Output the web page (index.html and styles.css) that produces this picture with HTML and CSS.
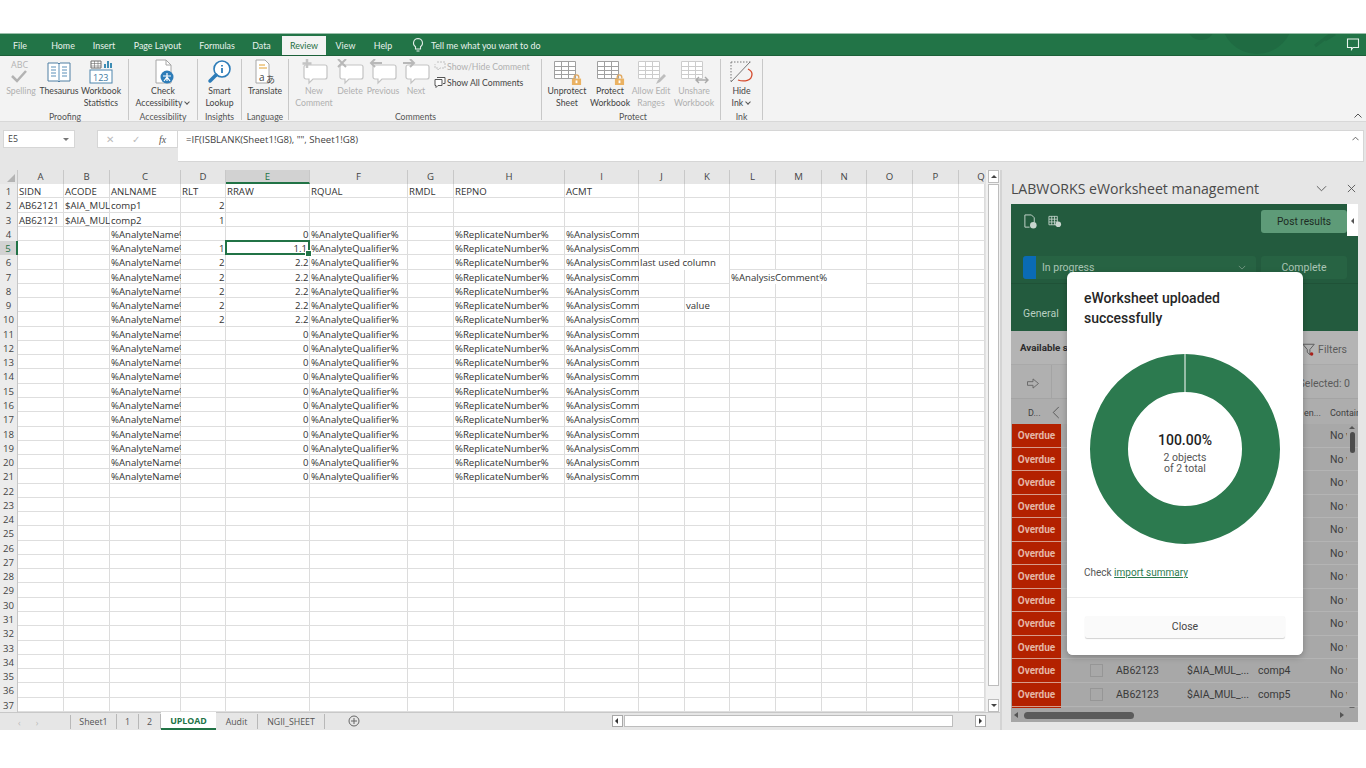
FILE: index.html
```html
<!DOCTYPE html>
<html lang="en">
<head>
<meta charset="utf-8">
<title>Excel - UPLOAD</title>
<link rel="stylesheet" href="styles.css">
</head>
<body>
<svg class="defs" width="0" height="0" aria-hidden="true">
  <symbol id="bubble" viewBox="0 0 30 26"><path d="M7 6h19a2 2 0 0 1 2 2v10a2 2 0 0 1-2 2H14l-4 4v-4H7a2 2 0 0 1-2-2V8a2 2 0 0 1 2-2z" fill="#fff" stroke="#c4c4c4" stroke-width="1.2"/></symbol>
  <symbol id="sheetgrid" viewBox="0 0 24 20"><path fill="#fff" d="M1 1h22v18H1z"/><path fill="none" stroke="currentColor" d="M1.500 1.500h21v17h-21zM1.500 6.500h21M1.500 10.500h21M1.500 14.500h21M8.500 1.500v17M15.500 1.500v17"/></symbol>
  <symbol id="lock" viewBox="0 0 12 12"><path fill="none" stroke="#e0a860" stroke-width="1.500" d="M3.500 5V3.500a2.500 2.500 0 0 1 5 0V5"/><rect x="1" y="5" width="10" height="7" fill="#eab263"/><rect x="5" y="7" width="2" height="3" fill="#fff"/></symbol>
</svg>

<div class="top-gap"></div>

<header class="menu">
  <nav class="tabs-nav">
    <span class="m m-file">File</span><span class="m m-home">Home</span><span class="m m-insert">Insert</span><span class="m m-layout">Page Layout</span><span class="m m-formulas">Formulas</span><span class="m m-data">Data</span><span class="m m-review">Review</span><span class="m m-view">View</span><span class="m m-help">Help</span>
    <svg class="bulb" viewBox="0 0 12 16" width="12" height="16"><path d="M6 1.500a4.500 4.500 0 0 0-2.500 8.200V12h5V9.700A4.500 4.500 0 0 0 6 1.500zM4.500 14h3" fill="none" stroke="#e4efe9" stroke-width="1.100"/></svg>
    <span class="m m-tell">Tell me what you want to do</span>
  </nav>
  <svg class="deco" viewBox="0 0 180 22" width="180" height="22"><circle cx="26" cy="-8" r="14" fill="#1f6b42"/><circle cx="82" cy="-16" r="36" fill="#1f6b42"/><path d="M-6 0l-8 4M140 12l16-12M150 6l10-6" stroke="#1f6b42" stroke-width="3"/></svg>
  <svg class="feedback" viewBox="0 0 14 14" width="14" height="14"><path d="M1.500 2h11v8.500H7l-1.500 2v-2h-4z" fill="none" stroke="#e8f2ec" stroke-width="1.100"/></svg>
</header>

<section class="ribbon">
  <div class="group g-proof">
    <div class="btns">
      <div class="btn dis w-spell"><svg viewBox="0 0 26 26" width="26" height="26"><text x="3" y="9" class="abc">ABC</text><path d="M4 17l5 5 9-10" fill="none" stroke="#b3b3b3" stroke-width="2.500"/></svg><span>Spelling</span></div>
      <div class="btn w-thes"><svg viewBox="0 0 26 26" width="26" height="26"><path d="M2 4h10l1 1 1-1h10v18H14l-1 1-1-1H2z" fill="#fff" stroke="#4f7ea3"/><path d="M13 5v17M5 8h5M5 11h5M5 14h5M5 17h5M16 8h5M16 11h5M16 14h5M16 17h5" stroke="#5b8fb8"/></svg><span>Thesaurus</span></div>
      <div class="btn w-stat"><svg viewBox="0 0 26 26" width="26" height="26"><rect x="2" y="11" width="22" height="13" fill="#fff" stroke="#4f86ad"/><text x="5" y="22" class="n123">123</text><path d="M3 2h10v7H3z" fill="#fff" stroke="#6c6c6c"/><path d="M3 4.500h10M3 7h10M6.500 2v7M10 2v7" stroke="#6c6c6c" stroke-width=".6"/><path d="M16 9V5h2v4zM19 9V2h2v7zM22 9V4h2v5z" fill="#3c8cb4"/></svg><span>Workbook<br>Statistics</span></div>
    </div>
    <div class="glabel">Proofing</div>
  </div>
  <div class="group g-acc">
    <div class="btns">
      <div class="btn"><svg viewBox="0 0 26 26" width="26" height="26"><path d="M6 1h10l5 5v18H6z" fill="#fff" stroke="#a6a6a6"/><path d="M16 1v5h5" fill="none" stroke="#a6a6a6"/><circle cx="17" cy="18" r="6.500" fill="#2d7cb8"/><path d="M17 14v8M13 17h8M14 22l3-4 3 4" stroke="#fff" stroke-width="1.200" fill="none"/></svg><span>Check<br>Accessibility <em class="chev"></em></span></div>
    </div>
    <div class="glabel">Accessibility</div>
  </div>
  <div class="group g-ins">
    <div class="btns">
      <div class="btn"><svg viewBox="0 0 26 26" width="26" height="26"><circle cx="15" cy="10" r="8" fill="#fff" stroke="#2d7cb8" stroke-width="1.600"/><path d="M9 16l-6 6" stroke="#2d7cb8" stroke-width="3.500" stroke-linecap="round"/><path d="M15 9v5M15 6v1.500" stroke="#2d7cb8" stroke-width="1.800"/></svg><span>Smart<br>Lookup</span></div>
    </div>
    <div class="glabel">Insights</div>
  </div>
  <div class="group g-lang">
    <div class="btns">
      <div class="btn"><svg viewBox="0 0 26 26" width="26" height="26"><path d="M4 1h9l4 4v19H4z" fill="#fff" stroke="#a6a6a6"/><path d="M7 6h6M7 9h8" stroke="#e0a030"/><text x="7" y="22" class="tr">a</text><text x="14" y="24" class="tr2">あ</text></svg><span>Translate</span></div>
    </div>
    <div class="glabel">Language</div>
  </div>
  <div class="group g-comm">
    <div class="btns">
      <div class="btn dis w-new"><svg viewBox="0 0 30 26" width="30" height="26"><use href="#bubble"/><path d="M8 0v9M3.500 4.500h9" stroke="#c4c4c4" stroke-width="2.500"/></svg><span>New<br>Comment</span></div>
      <div class="btn dis w-del"><svg viewBox="0 0 30 26" width="30" height="26"><use href="#bubble"/><path d="M3 0l8 8M11 0l-8 8" stroke="#b8b8b8" stroke-width="2"/></svg><span>Delete</span></div>
      <div class="btn dis w-prev"><svg viewBox="0 0 30 26" width="30" height="26"><use href="#bubble"/><path d="M14 4H3M7 0L3 4l4 4" fill="none" stroke="#b8b8b8" stroke-width="2"/></svg><span>Previous</span></div>
      <div class="btn dis w-next"><svg viewBox="0 0 30 26" width="30" height="26"><use href="#bubble"/><path d="M2 4h11M9 0l4 4-4 4" fill="none" stroke="#b8b8b8" stroke-width="2"/></svg><span>Next</span></div>
      <div class="side">
        <div class="side-i dis"><svg viewBox="0 0 12 12" width="12" height="12"><path d="M3 2h8v6H6l-2 2V8H1V4" fill="none" stroke="#c0c0c0" stroke-dasharray="2 1"/></svg>Show/Hide Comment</div>
        <div class="side-i"><svg viewBox="0 0 12 12" width="12" height="12"><path d="M3 1.500h8v6H9M1 3.500h7v6H4l-2 2v-2H1z" fill="#fff" stroke="#555"/></svg>Show All Comments</div>
      </div>
    </div>
    <div class="glabel">Comments</div>
  </div>
  <div class="group g-prot">
    <div class="btns">
      <div class="btn w-unp"><span class="iconbox grey"><svg viewBox="0 0 24 20" width="24" height="20"><use href="#sheetgrid"/></svg><svg class="lk" viewBox="0 0 12 12" width="11" height="11"><use href="#lock"/></svg></span><span>Unprotect<br>Sheet</span></div>
      <div class="btn w-pro"><span class="iconbox grey"><svg viewBox="0 0 24 20" width="24" height="20"><use href="#sheetgrid"/></svg><svg class="lk" viewBox="0 0 12 12" width="11" height="11"><use href="#lock"/></svg></span><span>Protect<br>Workbook</span></div>
      <div class="btn dis w-allow"><span class="iconbox pale"><svg viewBox="0 0 24 20" width="24" height="20"><use href="#sheetgrid"/></svg><svg class="lk" viewBox="0 0 12 12" width="12" height="12"><path d="M2 11l2-4 6-6 2 2-6 6z" fill="#bdbdbd"/></svg></span><span>Allow Edit<br>Ranges</span></div>
      <div class="btn dis w-unsh"><span class="iconbox pale"><svg viewBox="0 0 24 20" width="24" height="20"><use href="#sheetgrid"/></svg><svg class="lk" viewBox="0 0 14 10" width="14" height="10"><path d="M1 5h12M4 2L1 5l3 3M10 2l3 3-3 3" fill="none" stroke="#aaa" stroke-width="1.400"/></svg></span><span>Unshare<br>Workbook</span></div>
    </div>
    <div class="glabel">Protect</div>
  </div>
  <div class="group g-ink">
    <div class="btns">
      <div class="btn"><svg viewBox="0 0 26 26" width="26" height="26"><path d="M2 3h21" stroke="#777" stroke-dasharray="1.500 1.500"/><path d="M2 3v20" stroke="#777" stroke-dasharray="1.500 1.500"/><path d="M2 23L21 3" stroke="#777"/><path d="M9 21c6 2 14 1 14-6 0-3-2-4-4-5" fill="none" stroke="#d4492c" stroke-width="1.300"/></svg><span>Hide<br>Ink <em class="chev"></em></span></div>
    </div>
    <div class="glabel">Ink</div>
  </div>
  <svg class="collapse" viewBox="0 0 8 5" width="8" height="5"><path d="M.5 4.500L4 1l3.500 3.500" fill="none" stroke="#555"/></svg>
</section>

<div class="fbar">
  <div class="namebox"><span>E5</span><i class="dd"></i></div>
  <div class="fx"><span class="x">✕</span><span class="ck">✓</span><span class="fxt">fx</span></div>
  <div class="formula"><span>=IF(ISBLANK(Sheet1!G8), "", Sheet1!G8)</span><svg viewBox="0 0 8 5" width="7" height="5"><path d="M.5 4.500L4 1l3.500 3.500" fill="none" stroke="#555"/></svg></div>
</div>

<div class="work">
  <main class="excel">
    <div class="gridwrap">
      <div class="sheet">
        <div class="vlines"><i></i><i></i><i></i><i></i><i></i><i></i><i></i><i></i><i></i><i></i><i></i><i></i><i></i><i></i><i></i><i></i><i></i><i></i></div>
        <div class="row head"><b class="corner"></b><b>A</b><b>B</b><b>C</b><b>D</b><b class="on">E</b><b>F</b><b>G</b><b>H</b><b>I</b><b>J</b><b>K</b><b>L</b><b>M</b><b>N</b><b>O</b><b>P</b><b class="q">Q</b></div>
        <div class="row"><b>1</b><span class="a">SIDN</span><span class="b">ACODE</span><span class="c">ANLNAME</span><span class="d">RLT</span><span class="e">RRAW</span><span class="f">RQUAL</span><span class="g">RMDL</span><span class="h">REPNO</span><span class="i">ACMT</span></div>
        <div class="row"><b>2</b><span class="a">AB62121</span><span class="b">$AIA_MUL</span><span class="c">comp1</span><span class="d r">2</span></div>
        <div class="row"><b>3</b><span class="a">AB62121</span><span class="b">$AIA_MUL</span><span class="c">comp2</span><span class="d r">1</span></div>
        <div class="row"><b>4</b><span class="c">%AnalyteName%</span><span class="e r">0</span><span class="f">%AnalyteQualifier%</span><span class="h">%ReplicateNumber%</span><span class="i">%AnalysisComment%</span></div>
        <div class="row"><b class="on">5</b><span class="c">%AnalyteName%</span><span class="d r">1</span><span class="e r sel">1.1</span><span class="f">%AnalyteQualifier%</span><span class="h">%ReplicateNumber%</span><span class="i">%AnalysisComment%</span></div>
        <div class="row"><b>6</b><span class="c">%AnalyteName%</span><span class="d r">2</span><span class="e r">2.2</span><span class="f">%AnalyteQualifier%</span><span class="h">%ReplicateNumber%</span><span class="i">%AnalysisComment%</span><span class="j spill">last used column</span></div>
        <div class="row"><b>7</b><span class="c">%AnalyteName%</span><span class="d r">2</span><span class="e r">2.2</span><span class="f">%AnalyteQualifier%</span><span class="h">%ReplicateNumber%</span><span class="i">%AnalysisComment%</span><span class="l spill">%AnalysisComment%</span></div>
        <div class="row"><b>8</b><span class="c">%AnalyteName%</span><span class="d r">2</span><span class="e r">2.2</span><span class="f">%AnalyteQualifier%</span><span class="h">%ReplicateNumber%</span><span class="i">%AnalysisComment%</span></div>
        <div class="row"><b>9</b><span class="c">%AnalyteName%</span><span class="d r">2</span><span class="e r">2.2</span><span class="f">%AnalyteQualifier%</span><span class="h">%ReplicateNumber%</span><span class="i">%AnalysisComment%</span><span class="k">value</span></div>
        <div class="row"><b>10</b><span class="c">%AnalyteName%</span><span class="d r">2</span><span class="e r">2.2</span><span class="f">%AnalyteQualifier%</span><span class="h">%ReplicateNumber%</span><span class="i">%AnalysisComment%</span></div>
        <div class="row"><b>11</b><span class="c">%AnalyteName%</span><span class="e r">0</span><span class="f">%AnalyteQualifier%</span><span class="h">%ReplicateNumber%</span><span class="i">%AnalysisComment%</span></div>
        <div class="row"><b>12</b><span class="c">%AnalyteName%</span><span class="e r">0</span><span class="f">%AnalyteQualifier%</span><span class="h">%ReplicateNumber%</span><span class="i">%AnalysisComment%</span></div>
        <div class="row"><b>13</b><span class="c">%AnalyteName%</span><span class="e r">0</span><span class="f">%AnalyteQualifier%</span><span class="h">%ReplicateNumber%</span><span class="i">%AnalysisComment%</span></div>
        <div class="row"><b>14</b><span class="c">%AnalyteName%</span><span class="e r">0</span><span class="f">%AnalyteQualifier%</span><span class="h">%ReplicateNumber%</span><span class="i">%AnalysisComment%</span></div>
        <div class="row"><b>15</b><span class="c">%AnalyteName%</span><span class="e r">0</span><span class="f">%AnalyteQualifier%</span><span class="h">%ReplicateNumber%</span><span class="i">%AnalysisComment%</span></div>
        <div class="row"><b>16</b><span class="c">%AnalyteName%</span><span class="e r">0</span><span class="f">%AnalyteQualifier%</span><span class="h">%ReplicateNumber%</span><span class="i">%AnalysisComment%</span></div>
        <div class="row"><b>17</b><span class="c">%AnalyteName%</span><span class="e r">0</span><span class="f">%AnalyteQualifier%</span><span class="h">%ReplicateNumber%</span><span class="i">%AnalysisComment%</span></div>
        <div class="row"><b>18</b><span class="c">%AnalyteName%</span><span class="e r">0</span><span class="f">%AnalyteQualifier%</span><span class="h">%ReplicateNumber%</span><span class="i">%AnalysisComment%</span></div>
        <div class="row"><b>19</b><span class="c">%AnalyteName%</span><span class="e r">0</span><span class="f">%AnalyteQualifier%</span><span class="h">%ReplicateNumber%</span><span class="i">%AnalysisComment%</span></div>
        <div class="row"><b>20</b><span class="c">%AnalyteName%</span><span class="e r">0</span><span class="f">%AnalyteQualifier%</span><span class="h">%ReplicateNumber%</span><span class="i">%AnalysisComment%</span></div>
        <div class="row"><b>21</b><span class="c">%AnalyteName%</span><span class="e r">0</span><span class="f">%AnalyteQualifier%</span><span class="h">%ReplicateNumber%</span><span class="i">%AnalysisComment%</span></div>
        <div class="row"><b>22</b></div><div class="row"><b>23</b></div><div class="row"><b>24</b></div><div class="row"><b>25</b></div><div class="row"><b>26</b></div><div class="row"><b>27</b></div><div class="row"><b>28</b></div><div class="row"><b>29</b></div><div class="row"><b>30</b></div><div class="row"><b>31</b></div><div class="row"><b>32</b></div><div class="row"><b>33</b></div><div class="row"><b>34</b></div><div class="row"><b>35</b></div><div class="row"><b>36</b></div><div class="row"><b>37</b></div>
      </div>
      <div class="vscroll">
        <div class="arrow up"></div>
        <div class="thumb"></div>
        <div class="arrow down"></div>
      </div>
    </div>
    <footer class="tabbar">
      <div class="tabnav"><span>‹</span><span>›</span></div>
      <div class="tab t-s1">Sheet1</div><div class="tab t-1">1</div><div class="tab t-2">2</div><div class="tab active">UPLOAD</div><div class="tab t-aud">Audit</div><div class="tab t-ng">NGII_SHEET</div>
      <svg class="addsheet" viewBox="0 0 12 12" width="12" height="12"><circle cx="6" cy="6" r="5" fill="none" stroke="#666"/><path d="M6 3v6M3 6h6" stroke="#666"/></svg>
      <div class="hscroll"><i class="ar l"></i><i class="hthumb"></i><i class="ar r"></i></div>
    </footer>
  </main>

  <aside class="pane">
    <div class="pane-head"><h1>LABWORKS eWorksheet management</h1>
      <svg viewBox="0 0 12 7" width="11" height="7"><path d="M1 1l5 5 5-5" fill="none" stroke="#555"/></svg>
      <svg viewBox="0 0 10 10" width="9" height="9"><path d="M1 1l8 8M9 1l-8 8" stroke="#555"/></svg>
    </div>
    <div class="addin">
      <div class="gtop">
        <svg viewBox="0 0 16 16" width="15" height="17"><path d="M2 1h7l3 3v5M2 1v13h5" fill="none" stroke="#c9d6cf"/><circle cx="11" cy="12" r="3.500" fill="#c9d6cf"/></svg>
        <svg class="ic2" viewBox="0 0 15 13" width="14" height="13"><path d="M1 1h9v9H1zM1 4h9M1 7h9M4 1v9M7 1v9" fill="none" stroke="#c9d6cf" stroke-width=".9"/><circle cx="11" cy="9.500" r="3" fill="#c9d6cf"/></svg>
        <div class="post">Post results</div>
        <div class="handle"><i></i></div>
      </div>
      <div class="gstatus">
        <div class="status"><i class="blue"></i><span>In progress</span><svg viewBox="0 0 10 6" width="8" height="5"><path d="M1 1l4 4 4-4" fill="none" stroke="#7fa08d"/></svg></div>
        <div class="complete">Complete</div>
      </div>
      <div class="gtabs">General</div>
      <div class="avail"><b>Available s</b><div class="filters"><svg viewBox="0 0 16 16" width="14" height="15"><path d="M1 2h13L9 8v6L6 11V8z" fill="none" stroke="#555"/><circle cx="11" cy="13" r="2" fill="#a8201a"/></svg><span>Filters</span></div></div>
      <div class="toolbar"><svg viewBox="0 0 14 12" width="14" height="11"><path d="M1 4h6V1l6 5-6 5V8H1z" fill="none" stroke="#666"/></svg><i class="tsep"></i><span>Selected: 0</span></div>
      <div class="colhead"><span class="ch-d">D...</span><svg viewBox="0 0 8 14" width="8" height="13"><path d="M7 1L1 7l6 6" fill="none" stroke="#555"/></svg><span class="ch-en">en...</span><span class="ch-c">Contain</span></div>
      <div class="list">
        <div class="lrow"><b>Overdue</b><i class="cb"></i><span class="nov">No v</span></div>
        <div class="lrow"><b>Overdue</b><i class="cb"></i><span class="nov">No v</span></div>
        <div class="lrow"><b>Overdue</b><i class="cb"></i><span class="nov">No v</span></div>
        <div class="lrow"><b>Overdue</b><i class="cb"></i><span class="nov">No v</span></div>
        <div class="lrow"><b>Overdue</b><i class="cb"></i><span class="nov">No v</span></div>
        <div class="lrow"><b>Overdue</b><i class="cb"></i><span class="nov">No v</span></div>
        <div class="lrow"><b>Overdue</b><i class="cb"></i><span class="nov">No v</span></div>
        <div class="lrow"><b>Overdue</b><i class="cb"></i><span class="nov">No v</span></div>
        <div class="lrow"><b>Overdue</b><i class="cb"></i><span class="nov">No v</span></div>
        <div class="lrow"><b>Overdue</b><i class="cb"></i><span class="nov">No v</span></div>
        <div class="lrow"><b>Overdue</b><i class="cb"></i><span class="sid">AB62123</span><span class="ac">$AIA_MUL_...</span><span class="cp">comp4</span><span class="nov">No v</span></div>
        <div class="lrow"><b>Overdue</b><i class="cb"></i><span class="sid">AB62123</span><span class="ac">$AIA_MUL_...</span><span class="cp">comp5</span><span class="nov">No v</span></div>
        <div class="lrow"><b></b></div>
      </div>
      <div class="listthumb"></div>
      <i class="listup"></i><i class="listdown"></i>
      <div class="lscroll"><i class="la"></i><i class="lthumb"></i><i class="ra"></i></div>
    </div>

    <div class="modal">
      <div class="modal-body">
        <h2>eWorksheet uploaded successfully</h2>
        <div class="donut">
          <svg viewBox="0 0 190 192" width="190" height="192"><circle cx="95" cy="96" r="76" fill="none" stroke="#2c7a4f" stroke-width="38"/><path d="M95 1v38" stroke="#fff" stroke-width="1"/></svg>
          <div class="donut-text"><strong>100.00%</strong><span>2 objects<br>of 2 total</span></div>
        </div>
        <p class="check">Check <a>import summary</a></p>
      </div>
      <div class="modal-foot"><div class="close">Close</div></div>
    </div>
  </aside>
</div>
</body>
</html>
```
FILE: styles.css
```css
* { box-sizing: border-box; }
html, body { margin: 0; padding: 0; }
body { width: 1366px; height: 768px; overflow: hidden; background: #fff; font-family: "Open Sans", "Liberation Sans", sans-serif; color: #333; }
.defs { position: absolute; }
.top-gap { height: 33px; background: #fff; }

/* Title / tab strip */
.menu { position: relative; height: 23px; background: #227447; overflow: hidden; border-top: 1px solid #9bbfab; border-bottom: 1px solid #1c6039; }
.tabs-nav { display: flex; align-items: center; height: 21px; font-family: Lato, "Open Sans", sans-serif; font-size: 8.9px; color: #e9f2ed; }
.m { display: block; text-align: center; padding-top: 1px; }
.m-file { width: 40px; }
.m-home { width: 46px; }
.m-insert { width: 36px; }
.m-layout { width: 71px; }
.m-formulas { width: 48px; }
.m-data { width: 41px; }
.m-review { width: 44px; height: 20px; margin-top: 2px; padding-top: 0; line-height: 20px; background: #f3f3f3; color: #1f6f43; }
.m-view { width: 39px; }
.m-help { width: 36px; }
.bulb { margin-left: 11px; margin-top: 1px; }
.m-tell { margin-left: 7px; }
.deco { position: absolute; left: 1175px; top: 0; }
.feedback { position: absolute; left: 1346px; top: 3px; }

/* Ribbon */
.ribbon { position: relative; display: flex; height: 66px; background: #f3f3f3; border-bottom: 1px solid #d8d8d8; padding: 3px 0 2px; }
.group { display: flex; flex-direction: column; align-items: center; border-right: 1px solid #c8c8c8; height: 61px; font-family: Lato, "Open Sans", sans-serif; font-size: 8.7px; color: #444; }
.g-proof { width: 129px; align-items: flex-start; padding-left: 2px; }
.g-proof .glabel { align-self: center; }
.g-acc { width: 69px; }
.g-ins { width: 44px; }
.g-lang { width: 47px; }
.g-comm { width: 253px; align-items: flex-start; padding-left: 1px; }
.g-comm .glabel { align-self: center; }
.g-prot { width: 179px; align-items: flex-start; padding-left: 4px; }
.g-prot .glabel { align-self: center; }
.g-ink { width: 42px; }
.btns { display: flex; flex: 1; }
.btn { display: flex; flex-direction: column; align-items: center; text-align: center; line-height: 12px; white-space: nowrap; }
.btn > svg, .iconbox { flex: none; margin-bottom: 0; height: 26px; }
.btn.dis, .side-i.dis { color: #b0b0b0; }
.w-spell { width: 38px; } .w-thes { width: 38px; } .w-stat { width: 46px; }
.w-new { width: 48px; } .w-del { width: 24px; } .w-prev { width: 42px; } .w-next { width: 24px; }
.w-unp { width: 42px; } .w-pro { width: 44px; } .w-allow { width: 38px; } .w-unsh { width: 48px; }
.side { display: flex; flex-direction: column; gap: 4px; margin-left: 6px; padding-top: 1px; white-space: nowrap; }
.side-i { display: flex; align-items: center; gap: 1px; height: 12px; }
.glabel { height: 11px; line-height: 15px; font-size: 8.7px; color: #555; }
.chev { display: inline-block; width: 4px; height: 4px; margin: 0 1px 2px 1px; border-right: 1px solid #555; border-bottom: 1px solid #555; transform: rotate(45deg); }
.abc { font: 9px "Open Sans", sans-serif; fill: #b3b3b3; }
.n123 { font: 9px "Open Sans", sans-serif; fill: #3f7aa3; }
.tr { font: 10px "Open Sans", sans-serif; fill: #444; }
.tr2 { font: 9px "Noto Sans CJK JP", sans-serif; fill: #444; }
.iconbox { position: relative; display: block; width: 30px; padding-top: 1px; }
.iconbox svg { display: block; margin-left: 1px; }
.iconbox.grey { color: #a0a0a0; }
.iconbox.pale { color: #cccccc; }
.iconbox .lk { position: absolute; right: 0; bottom: 0; }
.collapse { position: absolute; right: 4px; bottom: 3px; }

/* Formula bar */
.fbar { display: flex; height: 48px; padding: 8px 0 0 3px; font-size: 8.8px; background: #e6e6e6; }
.namebox { position: relative; width: 72px; height: 18px; background: #fff; border: 1px solid #d6d6d6; line-height: 16px; padding-left: 4px; color: #444; }
.dd { position: absolute; right: 5px; top: 7px; border: 3px solid transparent; border-top: 3px solid #777; }
.fx { display: flex; align-items: center; width: 81px; height: 18px; margin-left: 22px; background: #fff; border: 1px solid #d6d6d6; color: #bbb; }
.x { margin-left: 8px; font-size: 10px; }
.ck { margin-left: 18px; font-size: 10px; }
.fxt { margin-left: 19px; font: italic 10px "Liberation Serif", serif; color: #555; }
.formula { display: flex; justify-content: space-between; width: 1186px; height: 32px; background: #fff; border: 1px solid #d6d6d6; border-left: 0; padding: 2px 4px 0 8px; font-size: 9.6px; color: #444; line-height: 13px; }
.formula svg { margin-top: 3px; }

/* Work area */
.work { display: flex; height: 560px; }
.excel { width: 1000px; flex: none; display: flex; flex-direction: column; background: #e6e6e6; }
.gridwrap { display: flex; height: 542px; background: #fff; }
.sheet { position: relative; width: 985px; flex: none; overflow: hidden; font-size: 9.6px; color: #333; }
.vlines, .row { display: grid; grid-template-columns: 18px 46px 46px 71px 45px 84px 98px 46px 111px 74px 46px 45px 46px 46px 45px 46px 46px 26px; }
.vlines { position: absolute; inset: 0; }
.vlines i { border-right: 1px solid #dcdcdc; }
.row { position: relative; grid-auto-rows: 14.27px; height: 14.27px; border-bottom: 1px solid #dedede; line-height: 15px; }
.row b { grid-column: 1; font-weight: 400; text-align: center; background: #ececec; border-right: 1px solid #c6c6c6; color: #444; }
.row b.on { background: #d2d2d2; border-right: 2px solid #217346; color: #217346; }
.row span { grid-row: 1; padding: 0 1.5px 0 1px; overflow: hidden; white-space: nowrap; }
.row .a { grid-column: 2; } .row .b { grid-column: 3; } .row .c { grid-column: 4; } .row .d { grid-column: 5; } .row .e { grid-column: 6; } .row .f { grid-column: 7; } .row .g { grid-column: 8; } .row .h { grid-column: 9; } .row .i { grid-column: 10; } .row .k { grid-column: 12; }
.row .j { grid-column: 11 / span 2; } .row .l { grid-column: 13 / span 3; }
.spill { background: #fff; margin-right: 1px; }
.row .r { text-align: right; }
.row .sel { position: relative; outline: 2px solid #217346; outline-offset: -2px; margin: -1px 0 0 -1px; padding: 1px 3px 0 2px; overflow: visible; z-index: 2; }
.row .sel::after { content: ""; position: absolute; right: -2px; bottom: -2px; width: 5px; height: 5px; background: #217346; border: 1px solid #fff; }
.row.head { height: 14px; background: #e6e6e6; border-bottom: 1px solid #b4b4b4; text-align: center; line-height: 14px; }
.row.head b { grid-column: auto; background: #e6e6e6; border-right: 1px solid #c8c8c8; }
.row.head b.on { background: #d2d2d2; border-right: 1px solid #c8c8c8; border-bottom: 2px solid #217346; height: 14px; color: #217346; }
.row.head .q { padding-left: 18px; border-right: 0; overflow: hidden; }
.row.head .corner { position: relative; }
.corner::after { content: ""; position: absolute; right: 2px; bottom: 2px; border: 4px solid transparent; border-right-color: #b4b4b4; border-bottom-color: #b4b4b4; }
.vscroll { display: flex; flex-direction: column; width: 15px; padding: 0 1px 0 2px; background: #f1f1f1; border-left: 1px solid #e2e2e2; }
.arrow { position: relative; height: 13px; background: #fff; border: 1px solid #bdbdbd; flex: none; }
.arrow::after { content: ""; position: absolute; left: 2px; border: 3px solid transparent; }
.arrow.up::after { top: 1px; border-bottom-color: #444; }
.arrow.down::after { top: 4px; border-top-color: #444; }
.thumb { height: 502px; background: #fff; border: 1px solid #bdbdbd; margin: 1px 0 auto; flex: none; }

.tabbar { position: relative; display: flex; align-items: stretch; height: 18px; background: #e6e6e6; border-top: 1px solid #c8c8c8; font-size: 8.8px; color: #555; }
.tabnav { display: flex; width: 71px; padding-left: 18px; gap: 15px; color: #bbb; line-height: 16px; border-right: 1px solid #b8b8b8; margin: 2px 0 1px; }
.tab { text-align: center; line-height: 17px; margin: 1px 0; border-right: 1px solid #b8b8b8; white-space: nowrap; }
.t-s1 { width: 46px; } .t-1 { width: 22px; } .t-2 { width: 22px; }
.tab.active { width: 55px; margin: -1px 0 0; height: 18px; background: #fff; border: 0; border-bottom: 2px solid #217346; color: #217346; font-weight: 700; line-height: 18px; }
.t-aud { width: 42px; } .t-ng { width: 67px; }
.addsheet { margin: 2px 0 0 23px; }
.hscroll { position: absolute; left: 612px; top: 2px; display: flex; width: 374px; height: 12px; }
.ar { position: relative; flex: none; width: 11px; height: 12px; background: #fff; border: 1px solid #a8a8a8; }
.ar.l::after, .ar.r::after { content: ""; position: absolute; top: 2px; border: 3px solid transparent; }
.ar.l::after { left: -1px; border-right-color: #333; }
.ar.r::after { left: 3px; border-left-color: #333; }
.hthumb { flex: none; width: 329px; height: 12px; margin-left: 1px; margin-right: 22px; background: #fff; border: 1px solid #bdbdbd; }

/* Task pane */
.pane { position: relative; width: 366px; flex: none; height: 560px; background: #e6e6e6; padding-left: 11px; border-left: 2px solid #d4d4d4; }
.pane-head { display: flex; align-items: center; height: 34px; margin-left: -2px; padding-top: 3px; }
.pane-head h1 { margin: 0; font-size: 14.1px; font-weight: 400; color: #4a4a4a; white-space: nowrap; width: 305px; font-family: "Open Sans", sans-serif; }
.pane-head svg + svg { margin-left: 20px; }
.addin { position: relative; width: 347px; height: 518px; margin-left: -2px; background: #a6a6a6; overflow: hidden; font-family: Roboto, sans-serif; font-size: 10px; }
.gtop { display: flex; align-items: center; height: 35px; background: #235b3e; padding: 0 0 0 12px; position: relative; }
.ic2 { margin-left: 10px; }
.post { position: absolute; left: 250px; top: 6px; width: 86px; height: 23px; background: #5e9b78; border-radius: 3px; text-align: center; line-height: 23px; color: #1d2b23; font-size: 10.2px; }
.handle { position: absolute; right: 0; top: 0; width: 11px; height: 32px; background: #fff; }
.handle i { position: absolute; left: 4px; top: 14px; border: 3px solid transparent; border-right-color: #555; border-left-width: 0; }
.gstatus { display: flex; height: 45px; background: #235b3e; padding-top: 17px; border-bottom: 1px solid #1f5237; }
.status { display: flex; align-items: center; width: 233px; height: 23px; margin-left: 12px; padding-right: 10px; background: #276343; border-radius: 3px; color: #aac5b5; font-size: 10.5px; }
.blue { width: 13px; height: 23px; background: #0a6bb5; border-radius: 3px 0 0 3px; }
.status span { flex: 1; margin-left: 6px; }
.complete { width: 86px; height: 23px; margin-left: 5px; background: #276343; border-radius: 3px; text-align: center; line-height: 23px; color: #aac5b5; font-size: 10.5px; }
.gtabs { height: 47px; background: #235b3e; padding: 23px 0 0 12px; color: #b8cfc1; font-size: 10.5px; }
.avail { display: flex; justify-content: space-between; align-items: center; height: 34px; background: #b4b4b4; padding: 0 11px 0 9px; border-bottom: 1px solid #a9a9a9; color: #2c2c2c; }
.avail b { font-size: 9.8px; }
.filters { display: flex; align-items: center; gap: 2px; padding-top: 3px; color: #5c5c5c; font-size: 10.5px; }
.toolbar { position: relative; display: flex; align-items: center; justify-content: space-between; height: 34px; background: #b0b0b0; padding: 4px 8px 0 15px; border-bottom: 1px solid #a4a4a4; color: #5a5a5a; font-size: 10.5px; }
.tsep { position: absolute; left: 40px; top: 0; bottom: 0; width: 1px; background: #a4a4a4; }
.colhead { position: relative; height: 25px; background: #adadad; line-height: 28px; color: #404040; font-size: 9px; }
.colhead svg { position: absolute; left: 41px; top: 7px; }
.ch-d { position: absolute; left: 17px; }
.ch-en { position: absolute; left: 293px; }
.ch-c { position: absolute; left: 319px; }
.list { height: 286px; overflow: hidden; background: #a8a8a8; }
.lrow { display: grid; grid-template-columns: 50px 29px 13px 13px 71px 71px 72px 1fr; height: 23.55px; line-height: 24.5px; border-bottom: 1px solid #b4b4b4; color: #3a3a3a; font-size: 10.5px; }
.lrow b { grid-column: 1; background: #b32100; color: #e5b6a6; text-align: center; font-size: 10px; border-bottom: 1px solid #d79c8b; height: 23.55px; margin-left: 1px; }
.cb { grid-column: 3; width: 13px; height: 13px; margin-top: 5px; border: 1px solid #969696; }
.sid { grid-column: 5; } .ac { grid-column: 6; white-space: nowrap; } .cp { grid-column: 7; }
.nov { grid-column: 8; color: #3f3f3f; overflow: hidden; white-space: nowrap; width: 17px; }
.listthumb { position: absolute; right: 3px; top: 228px; width: 5px; height: 21px; background: #4d4d4d; border-radius: 3px; }
.listup { position: absolute; right: 3px; top: 219px; border: 3px solid transparent; border-bottom-color: #555; }
.listdown { position: absolute; right: 3px; top: 503px; border: 3px solid transparent; border-top-color: #666; }
.lscroll { position: absolute; left: 0; bottom: 0; display: flex; align-items: center; width: 347px; height: 14px; background: #a6a6a6; }
.la, .ra { border: 3px solid transparent; }
.la { margin-left: 3px; border-right: 4px solid #555; border-left-width: 0; }
.ra { position: absolute; right: 14px; border-left: 4px solid #555; border-right-width: 0; }
.lthumb { width: 110px; height: 7px; margin-left: 6px; background: #5b5b5b; border-radius: 4px; }

/* Modal */
.modal { position: absolute; left: 65px; top: 102px; width: 236px; height: 383px; display: flex; flex-direction: column; background: #fff; border-radius: 6px; box-shadow: 0 2px 6px rgba(0,0,0,.25); font-family: Roboto, sans-serif; overflow: hidden; }
.modal-body { height: 326px; padding: 16px 17px 0; border-bottom: 1px solid #ececec; }
.modal-body h2 { margin: 0; font-size: 14px; line-height: 20px; font-weight: 500; color: #262626; }
.donut { position: relative; width: 190px; height: 192px; margin: 25px 0 0 6px; }
.donut svg { display: block; }
.donut-text { position: absolute; inset: 0; display: flex; flex-direction: column; align-items: center; justify-content: center; padding-top: 6px; text-align: center; color: #555; font-size: 10.5px; line-height: 11.5px; }
.donut-text strong { font-size: 14px; line-height: 20px; font-weight: 500; color: #1f1f1f; margin-bottom: 2px; }
.check { margin: 22px 0 0; font-size: 10px; color: #555; line-height: 12px; }
.check a { color: #2c7a4f; text-decoration: underline; }
.modal-foot { flex: 1; padding: 18px 18px 0; background: #fff; }
.close { height: 22px; background: #fafafa; border-radius: 2px; box-shadow: 0 1px 1px rgba(0,0,0,.18); text-align: center; line-height: 22px; font-size: 10.5px; color: #444; }
```
